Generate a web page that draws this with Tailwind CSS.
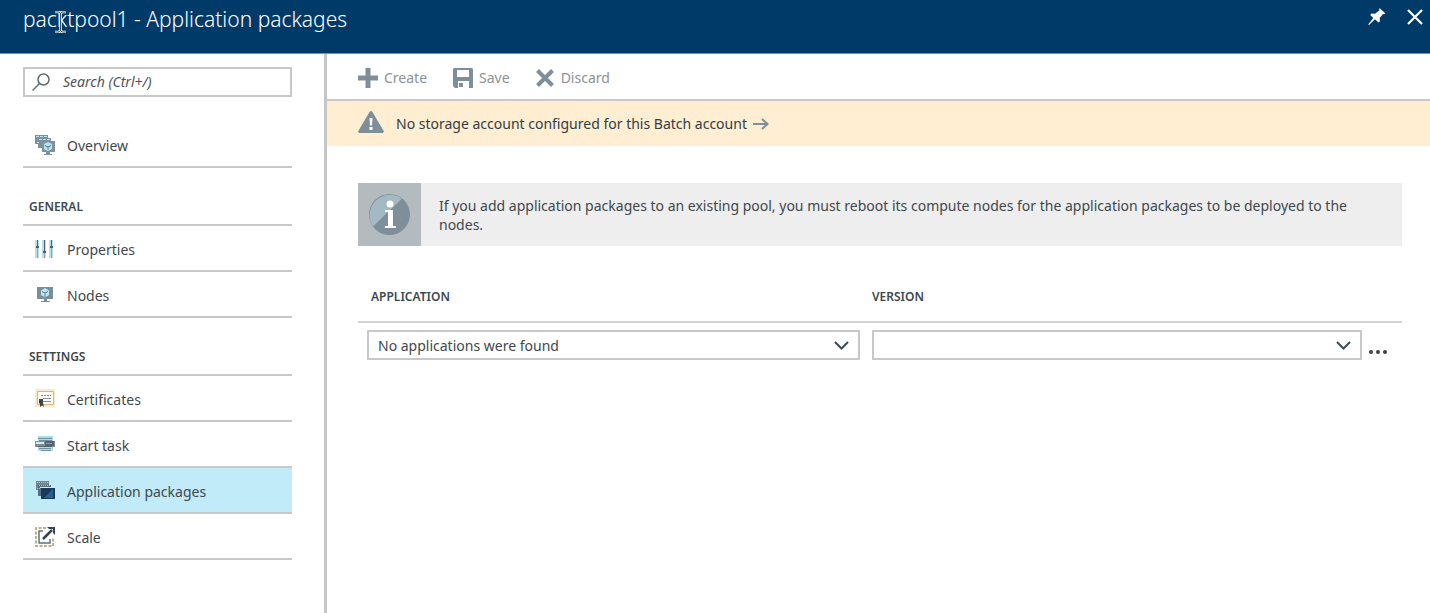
<!DOCTYPE html>
<html lang="en">
<head>
<meta charset="utf-8">
<title>packtpool1 - Application packages</title>
<script src="https://cdn.jsdelivr.net/npm/@tailwindcss/browser@4"></script>
</head>
<body class="flex min-h-screen flex-col bg-white font-['Noto_Sans','Open_Sans',sans-serif] text-[14px] text-[#3f484d]">
<header class="relative flex h-[54px] shrink-0 items-start justify-between border-b border-[#7e8f99] bg-[#003a69] pr-1.5 pl-[23px] text-white">
  <h1 class="pt-1 text-[21px] leading-[30px] font-light">packtpool1 - Application packages</h1>
  <svg class="absolute top-[11px] left-[54px] h-[22px] w-[13px]" viewBox="0 0 13 22" fill="none" aria-hidden="true"><path d="M1 1h4l1.500 1.500L8 1h4M6.500 2v18M1 21h4l1.500-1.500L8 21h4" stroke="#fff" stroke-width="2.500"/><path d="M1 1h4l1.500 1.500L8 1h4M6.500 2v18M1 21h4l1.500-1.500L8 21h4" stroke="#4b4b4b" stroke-width="1"/></svg>
  <div class="flex gap-5 pt-2">
    <button aria-label="Pin"><svg class="size-[18px]" viewBox="0 0 18 18" fill="#fff"><path d="M11.500 0l6 5.500-1.500.8-1-.3-3.300 4 .2 3.500-1.500 1L7 11.300 1 17l-.8-.5L5.300 10 2.200 7l1.300-1.500 3.500.3L11.300 2.500z"/></svg></button>
    <button aria-label="Close"><svg class="size-[18px]" viewBox="0 0 18 18" fill="none" stroke="#fff" stroke-width="2.200"><path d="M2 2l14 14M16 2L2 16"/></svg></button>
  </div>
</header>
<div class="flex grow">
  <aside class="w-[327px] shrink-0 border-r-3 border-[#c4c6c8] pt-[13px] pr-[34px] pl-[23px]">
    <label class="-mr-0.5 flex h-[30px] items-center border-2 border-[#c8c8c8] pl-1.5">
      <svg class="size-5 shrink-0" viewBox="0 0 20 20" fill="none" stroke="#5c6b75" stroke-width="1.500"><circle cx="12.500" cy="7.500" r="5.500"/><path d="M8.500 11.500L1.500 18.500"/></svg>
      <input type="text" aria-label="Search" placeholder="Search (Ctrl+/)" class="ml-3 w-full min-w-0 bg-transparent text-[14px] leading-5 italic outline-none placeholder:text-[#4d5459]">
    </label>
    <nav class="mt-6 -mr-0.5">
      <a href="#" class="flex h-[47px] items-center gap-3 border-b-2 border-[#c8c8c8] pt-1 pl-3">
        <svg class="mb-0.5 size-5" viewBox="0 0 20 20"><path fill="#7d929c" d="M0 0h13v3h3v3h4v11h-5v2h2v1H9v-1h2v-2H7v-4H3V9H0z"/><path fill="#b9e3f2" d="M1 1h3v1H1zM5 1h3v1H5zM9 1h3v1H9zM4 4h3v1H4zM8 4h3v1H8zM12 4h3v1h-3zM2 7h2v1H2z"/><path fill="#b9e3f2" d="M13 7l4 2v5l-4 2-4-2V9z"/><path fill="#5d7c89" d="M10 10l3 1.500 3-1.500v1l-2.500 1.500v2h-1v-2L10 11z"/></svg>
        Overview
      </a>
      <h2 class="flex h-[58px] items-end border-b-2 border-[#c8c8c8] pb-[7px] pl-1.5 text-[12px] leading-5 font-semibold">GENERAL</h2>
      <a href="#" class="flex h-[46px] items-center gap-3 border-b-2 border-[#c8c8c8] pt-0.5 pl-3">
        <svg class="size-5" viewBox="0 0 20 20"><path fill="#b9dfea" d="M0 1h4v18H0zM7 1h4v18H7zM14 1h4v18h-4z"/><path fill="#50626c" d="M2 1h1v6h1v2H1V7h1zM9 1h1v11h1v2H8v-2h1zM16 1h1v6h1v2h-3V7h1z"/><path fill="#8da4ad" d="M2 9h1v10H2zM9 14h1v5H9zM16 9h1v10h-1z"/></svg>
        Properties
      </a>
      <a href="#" class="flex h-[46px] items-center gap-3 border-b-2 border-[#c8c8c8] pt-0.5 pl-3">
        <svg class="size-5" viewBox="0 0 20 20"><path fill="#7a8e98" d="M2 2h16v12h-6v2h3v1H6v-1h3v-2H2z"/><path fill="#b9e7f6" d="M10 3l4 2.500v4.500l-4 2.500-4-2.500V5.500z"/><path fill="#5d8594" d="M7 6l3 1.500L13 6v1l-2.500 1.500V12h-1V8.500L7 7z"/></svg>
        Nodes
      </a>
      <h2 class="flex h-[58px] items-end border-b-2 border-[#c8c8c8] pb-[7px] pl-1.5 text-[12px] leading-5 font-semibold">SETTINGS</h2>
      <a href="#" class="flex h-[46px] items-center gap-3 border-b-2 border-[#c8c8c8] pt-0.5 pl-3">
        <svg class="size-5" viewBox="0 0 20 20"><path fill="#fdebc8" d="M0 0h20v18H0z"/><path fill="#fffdf8" stroke="#c9b893" d="M2.500 2.500h16v13h-16z"/><path stroke="#7c7f80" stroke-dasharray="2 1" d="M6 6.500h10"/><path stroke="#8b8f90" d="M8 9.500h8M8 12.500h8"/><path fill="#3e4347" d="M4 10h4v4l1 4-2-1.500L5 18v-3.500H4z"/></svg>
        Certificates
      </a>
      <a href="#" class="flex h-[46px] items-center gap-3 border-b-2 border-[#c8c8c8] pt-0.5 pl-3">
        <svg class="size-5" viewBox="0 0 20 20"><path fill="#a9dced" d="M3 1h15v5H3zM3 12h15v4H3z"/><path fill="#71909f" d="M3 3h14v1H3zM4 5h13v1H4zM4 13h12v1H4zM6 15h10v1H6z"/><path fill="#7d8f99" d="M0 6h20v6H0z"/><path fill="#dde5e8" d="M1 7h8v2H1z"/><path fill="#55636d" d="M10 6h9v5h-9zM3 11h14v1H3z"/><path fill="#91a5af" d="M11 8h6v1h-6z"/></svg>
        Start task
      </a>
      <a href="#" aria-current="page" class="flex h-[46px] items-center gap-3 border-b-2 border-[#c8c8c8] bg-[#c1ebf9] pt-0.5 pl-3">
        <svg class="size-5" viewBox="0 0 20 20"><path fill="#72838d" d="M1 0h13v9H1z"/><path fill="#596d7a" d="M3 4h13v11H3z"/><path stroke="#afc8d2" stroke-dasharray="1 1" d="M2 1.500h11M4 4.500h11M2 7.500h4"/><path fill="#163b60" d="M6 7h14v11H6z"/><path fill="#2d5f8c" d="M18 8v9H9z"/><path stroke="#dbe8ee" d="M5 6.500h15"/></svg>
        Application packages
      </a>
      <a href="#" class="flex h-[46px] items-center gap-3 border-b-2 border-[#c8c8c8] pt-0.5 pl-3">
        <svg class="size-5" viewBox="0 0 20 20" fill="none"><path stroke="#a79669" stroke-width="1.500" stroke-dasharray="3 1.500" d="M11 1H1v18h17V10"/><path stroke="#5e7180" stroke-width="1.500" d="M8 4H4v12h11v-4"/><path stroke="#344452" stroke-width="2.500" d="M8 12l9-9"/><path fill="#344452" d="M12 0h8v8l-2-2V2h-4z"/></svg>
        Scale
      </a>
    </nav>
  </aside>
  <main class="min-w-0 grow">
    <div class="flex h-[47px] items-center gap-[26px] border-b-2 border-[#c8c8c8] pt-0.5 pl-[31px] text-[#8b9296]">
      <button class="flex items-center gap-1.5"><svg class="size-5" viewBox="0 0 20 20" fill="#7e8f99"><path d="M7.500 0h5v7.500H20v5h-7.500V20h-5v-7.500H0v-5h7.500z"/></svg>Create</button>
      <button class="flex items-center gap-1.5"><svg class="size-5" viewBox="0 0 20 20" fill="#7e8f99"><path fill-rule="evenodd" d="M1 0h18l1 1v19h-4v-7H5v7H2l-2-2V1zM4 2v7h12V2zM6 15h4v4H6z"/></svg>Save</button>
      <button class="flex items-center gap-[7px]"><svg class="size-[18px]" viewBox="0 0 18 18" stroke="#7e8f99" stroke-width="4"><path d="M1.500 1.500l15 15M16.500 1.500l-15 15"/></svg>Discard</button>
    </div>
    <div class="flex h-[45px] items-center bg-[#ffeed1] pl-[31px]">
      <svg class="mb-1 h-[22px] w-[26px]" viewBox="0 0 26 22"><path fill="#7e8f99" d="M11.500 1Q13-1 14.500 1L26 20.500 25 22H1L0 20.500z"/><path fill="#fff" d="M11.500 7h3l-.5 7.500h-2zM11.500 16h3v3h-3z"/></svg>
      <a href="#" class="ml-3 flex items-center gap-1.5 text-[#333d46]">No storage account configured for this Batch account
        <svg class="h-3 w-4" viewBox="0 0 16 12" fill="none" stroke="#7e8f99" stroke-width="2"><path d="M0 6h14M9 1l5.500 5L9 11"/></svg></a>
    </div>
    <section class="mt-[37px] mr-7 ml-[31px]">
      <div class="flex bg-[#eee]">
        <div class="flex size-[63px] shrink-0 items-center justify-center bg-[#b4bbbf]">
          <svg class="size-[41px]" viewBox="0 0 41 41"><circle cx="20.500" cy="20.500" r="20.500" fill="#7e8f99"/><path fill="#a3b9c4" d="M4 32.500A20.500 20.500 0 0 1 33 4.500z"/><circle cx="21" cy="10" r="3.500" fill="#fff"/><path fill="#fff" d="M16 16h8v16h3v2H16v-2h3V18h-3z"/></svg>
        </div>
        <p class="self-center pr-6 pl-[18px] leading-[19px]">If you add application packages to an existing pool, you must reboot its compute nodes for the application packages to be deployed to the nodes.</p>
      </div>
      <table class="mt-8 w-full table-fixed">
        <thead>
          <tr class="h-11 border-b-2 border-[#d2d2d2] text-left align-top text-[12px] leading-5">
            <th class="w-[49.23%] pt-[9px] pl-[13px] font-semibold"><span id="app">APPLICATION</span></th>
            <th class="pt-[9px] font-semibold"><span id="ver">VERSION</span></th>
            <th class="w-10"></th>
          </tr>
        </thead>
        <tbody>
          <tr>
            <td class="pt-[7px] pr-3 pl-[9px]">
              <div class="relative">
                <select aria-labelledby="app" class="block h-[30px] w-full appearance-none border-2 border-[#c8c8c8] bg-white pl-[9px]"><option>No applications were found</option></select>
                <svg class="pointer-events-none absolute top-[11px] right-[11px] h-[9px] w-[15px]" viewBox="0 0 15 9" fill="none" stroke="#3f4d55" stroke-width="2"><path d="M1 1l6.500 6.500L14 1"/></svg>
              </div>
            </td>
            <td class="pt-[7px]">
              <div class="relative">
                <select aria-labelledby="ver" class="block h-[30px] w-full appearance-none border-2 border-[#c8c8c8] bg-white pl-[9px]"><option></option></select>
                <svg class="pointer-events-none absolute top-[11px] right-[11px] h-[9px] w-[15px]" viewBox="0 0 15 9" fill="none" stroke="#3f4d55" stroke-width="2"><path d="M1 1l6.500 6.500L14 1"/></svg>
              </div>
            </td>
            <td class="pt-5 pl-[7px]"><button aria-label="More" class="block"><svg class="h-1 w-[18px]" viewBox="0 0 18 4" fill="#3c4449"><circle cx="2" cy="2" r="2"/><circle cx="9" cy="2" r="2"/><circle cx="16" cy="2" r="2"/></svg></button></td>
          </tr>
        </tbody>
      </table>
    </section>
  </main>
</div>
</body>
</html>
